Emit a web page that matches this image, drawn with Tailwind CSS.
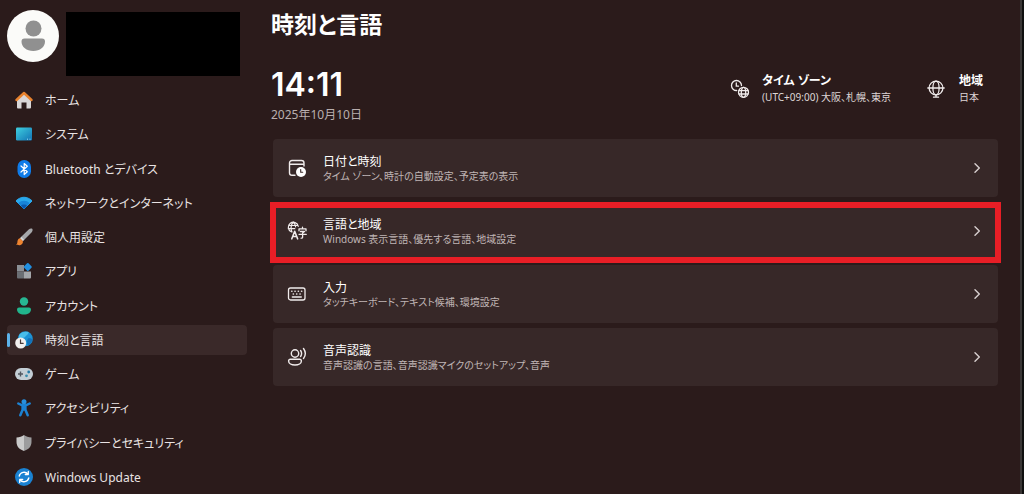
<!DOCTYPE html>
<html lang="ja">
<head>
  <meta charset="UTF-8" />
  <meta name="viewport" content="width=device-width, initial-scale=1" />
  <title>時刻と言語 - 設定</title>
  <script src="https://cdn.jsdelivr.net/npm/@tailwindcss/browser@4"></script>
</head>
<body class="flex min-h-screen border-r-2 border-[#10100f] bg-[#2b1b1b] font-['Noto_Sans','Noto_Sans_CJK_JP',sans-serif] text-[#e9e3e3] [font-feature-settings:'palt']">

  <!-- Sidebar -->
  <aside class="flex w-[248px] shrink-0 flex-col pl-[7px]">
    <div class="flex h-[83px] shrink-0 items-start gap-[7px] pt-[10px]">
      <svg class="h-[52px] w-[52px] shrink-0" viewBox="0 0 52 52" role="img" aria-label="ユーザー">
        <circle cx="26" cy="26" r="26" fill="#fbfbf9" />
        <circle cx="26.500" cy="18.500" r="8" fill="#909090" />
        <path d="M17.500 28.500h17.500a3 3 0 0 1 3 3c0 5.500-5 9.500-11.700 9.500s-11.800-4-11.800-9.500a3 3 0 0 1 3-3z" fill="#909090" />
      </svg>
      <div class="mt-[2px] h-[64px] w-[174px] bg-black"></div>
    </div>

    <nav class="flex flex-1 pr-[1px]" aria-label="設定">
      <ul class="flex flex-1 flex-col text-[12px] leading-4">
        <li class="flex flex-1 py-[2px]">
          <a href="#" class="flex flex-1 items-center gap-3 rounded px-2 hover:bg-white/5">
            <svg class="h-[18px] w-[18px]" viewBox="0 0 18 18">
              <path d="M2 8.500 9 2.500l7 6V16.500a1 1 0 0 1-1 1h-3.500v-6h-5v6H3a1 1 0 0 1-1-1z" fill="#d9d6d7" />
              <path d="M1.500 9 9 2l7.500 7" fill="none" stroke="#e8822e" stroke-width="2.400" stroke-linecap="round" stroke-linejoin="round" />
            </svg>
            <span class="pt-[2px]">ホーム</span>
          </a>
        </li>
        <li class="flex flex-1 py-[2px]">
          <a href="#" class="flex flex-1 items-center gap-3 rounded px-2 hover:bg-white/5">
            <svg class="h-[18px] w-[18px]" viewBox="0 0 18 18">
              <defs><linearGradient id="screen" x1="0" y1="0" x2="1" y2="1"><stop offset="0" stop-color="#3fd0e0" /><stop offset="1" stop-color="#1273b4" /></linearGradient></defs>
              <rect x="1" y="2.500" width="16" height="13" rx="1.200" fill="url(#screen)" />
              <path d="M12 14.200h1M14.500 14.200h1" stroke="#9fdcf5" stroke-width="1" />
            </svg>
            <span class="pt-[2px]">システム</span>
          </a>
        </li>
        <li class="flex flex-1 py-[2px]">
          <a href="#" class="flex flex-1 items-center gap-3 rounded px-2 hover:bg-white/5">
            <svg class="h-[18px] w-[18px]" viewBox="0 0 18 18">
              <rect x="2.500" y="0" width="13.500" height="18" rx="6.700" fill="#0f7be8" />
              <path d="M6 6l6.300 5.700L9.200 14.500V3.500l3.100 2.800L6 12" fill="none" stroke="#fff" stroke-width="1.200" stroke-linejoin="round" stroke-linecap="round" />
            </svg>
            <span class="pt-[2px]">Bluetooth とデバイス</span>
          </a>
        </li>
        <li class="flex flex-1 py-[2px]">
          <a href="#" class="flex flex-1 items-center gap-3 rounded px-2 hover:bg-white/5">
            <svg class="h-[18px] w-[18px]" viewBox="0 0 18 18">
              <path d="M1 7C5.500 2 12.500 2 17 7L9 15z" fill="#29a8ec" stroke="#29a8ec" stroke-linejoin="round" />
              <path d="M3.300 9.300C6.500 6 11.500 6 14.700 9.300L9 15z" fill="#1784d8" />
              <path d="M5.800 11.700C7.500 10 10.500 10 12.200 11.700L9 15z" fill="#0b58ad" />
            </svg>
            <span class="pt-[2px]">ネットワークとインターネット</span>
          </a>
        </li>
        <li class="flex flex-1 py-[2px]">
          <a href="#" class="flex flex-1 items-center gap-3 rounded px-2 hover:bg-white/5">
            <svg class="h-[18px] w-[18px]" viewBox="0 0 18 18">
              <path d="M17.200.8c-1-.8-2.400-.3-3.500.8L6 9l3 3 7.500-7.500c1.100-1.200 1.500-2.800.7-3.700z" fill="#a5a7aa" />
              <path d="M6.300 8.800 4.900 10.300l3 2.900 1.400-1.400z" fill="#d9dadb" />
              <path d="M4.900 10.300l3 2.900c.3 2.400-1.700 4-3.700 4-1.300 0-2.500-.3-3-.9 1.500-.4 1-1.800 1.300-3.200.4-1.700 1.300-2.600 2.400-2.800z" fill="#ee8430" />
            </svg>
            <span class="pt-[2px]">個人用設定</span>
          </a>
        </li>
        <li class="flex flex-1 py-[2px]">
          <a href="#" class="flex flex-1 items-center gap-3 rounded px-2 hover:bg-white/5">
            <svg class="h-[18px] w-[18px]" viewBox="0 0 18 18">
              <path d="M2 3h7v6.500H2z" fill="#8b9096" />
              <path d="M2 9.500h7v7H3a1 1 0 0 1-1-1z" fill="#6b6f74" />
              <path d="M9 9.500h7v6a1 1 0 0 1-1 1H9z" fill="#a3a6aa" />
              <rect x="9.700" y="1.900" width="6.200" height="6.200" rx="1" transform="rotate(45 12.800 5)" fill="#218fe0" />
            </svg>
            <span class="pt-[2px]">アプリ</span>
          </a>
        </li>
        <li class="flex flex-1 py-[2px]">
          <a href="#" class="flex flex-1 items-center gap-3 rounded px-2 hover:bg-white/5">
            <svg class="h-[18px] w-[18px]" viewBox="0 0 18 18">
              <circle cx="9" cy="4.500" r="4.200" fill="#27b793" />
              <path d="M4 10.500h10a2 2 0 0 1 2 2c0 3-3 5-7 5s-7-2-7-5a2 2 0 0 1 2-2z" fill="#21b58c" />
            </svg>
            <span class="pt-[2px]">アカウント</span>
          </a>
        </li>
        <li class="flex flex-1 py-[2px]">
          <a href="#" aria-current="page" class="relative flex flex-1 items-center gap-3 rounded bg-[#3a2929] px-2">
            <span class="absolute left-0 h-[14px] w-[3px] rounded-full bg-[#5cb2ea]"></span>
            <svg class="h-[18px] w-[18px]" viewBox="0 0 18 18">
              <circle cx="10.300" cy="7.800" r="7.500" fill="#1c93d6" />
              <path d="M4 4C6 1 10 0 13.500 1c.5 2-2 3-3 4.500S6 7 4 8z" fill="#48bdea" />
              <path d="M13 7.500c2-.5 3.500 0 4.500 1-.3 2.500-2 4.800-4.500 6-1.500-2-1.500-5 0-7z" fill="#1272ba" />
              <circle cx="5.700" cy="12" r="5.500" fill="#f1efee" />
              <path d="M5.500 8.800V12.300H8.200" fill="none" stroke="#47393a" stroke-width="1.200" stroke-linecap="round" />
            </svg>
            <span class="pt-[2px]">時刻と言語</span>
          </a>
        </li>
        <li class="flex flex-1 py-[2px]">
          <a href="#" class="flex flex-1 items-center gap-3 rounded px-2 hover:bg-white/5">
            <svg class="h-[18px] w-[18px]" viewBox="0 0 18 18">
              <rect x="0" y="3" width="18" height="12" rx="6" fill="#c3ced5" />
              <path d="M5.500 6.500v5M3 9h5" stroke="#50565e" stroke-width="1.400" />
              <circle cx="13.700" cy="7" r="1.400" fill="#2479a6" />
              <circle cx="11.500" cy="10.800" r="1.400" fill="#3a8cac" />
            </svg>
            <span class="pt-[2px]">ゲーム</span>
          </a>
        </li>
        <li class="flex flex-1 py-[2px]">
          <a href="#" class="flex flex-1 items-center gap-3 rounded px-2 hover:bg-white/5">
            <svg class="h-[18px] w-[18px]" viewBox="0 0 18 18">
              <circle cx="9" cy="2.800" r="2.500" fill="#2791e0" />
              <path d="M3.300 4.500 6.800 6.200h4.400l3.500-1.700M9 6.500v4M7.600 6.500v4.300L5.300 16.300M10.400 6.500v4.300l2.300 5.500" fill="none" stroke="#1c82d3" stroke-width="2.500" stroke-linecap="round" stroke-linejoin="round" />
            </svg>
            <span class="pt-[2px]">アクセシビリティ</span>
          </a>
        </li>
        <li class="flex flex-1 py-[2px]">
          <a href="#" class="flex flex-1 items-center gap-3 rounded px-2 hover:bg-white/5">
            <svg class="h-[18px] w-[18px]" viewBox="0 0 18 18">
              <path d="M9 1C7 2.600 4.500 3.300 1.500 3.500V8c0 4.500 3 7.500 7.500 9z" fill="#cacaca" />
              <path d="M9 1c2 1.600 4.500 2.300 7.500 2.500V8c0 4.500-3 7.500-7.500 9z" fill="#9c9c9d" />
            </svg>
            <span class="pt-[2px]">プライバシーとセキュリティ</span>
          </a>
        </li>
        <li class="flex flex-1 py-[2px]">
          <a href="#" class="flex flex-1 items-center gap-3 rounded px-2 hover:bg-white/5">
            <svg class="h-[18px] w-[18px]" viewBox="0 0 18 18">
              <circle cx="9" cy="9" r="9" fill="#1a82d2" />
              <path d="M4.200 8A5 5 0 0 1 13 6.200M13.800 10A5 5 0 0 1 5 11.800M13.300 3.500v3h-3M4.700 14.500v-3h3" fill="none" stroke="#fff" stroke-width="1.300" stroke-linecap="round" stroke-linejoin="round" />
            </svg>
            <span class="pt-[2px]">Windows Update</span>
          </a>
        </li>
      </ul>
    </nav>
  </aside>

  <!-- Main content -->
  <main class="min-w-0 flex-1 border-r-2 border-[#3a3635] pr-[22px] pl-[23px]">
    <h1 class="pt-1 text-[23px] leading-10 font-semibold text-white">時刻と言語</h1>

    <div class="flex items-start pt-[22px]">
      <div class="flex-1">
        <p class="font-['Inter',sans-serif] text-[32px] leading-[38px] font-semibold text-white">14:11</p>
        <p class="pt-[3px] text-[12px] leading-4 text-[#b9afaf]">2025年10月10日</p>
      </div>
      <div class="flex gap-9 pt-[7px] pr-[15px]">
        <div class="flex items-center gap-3">
          <svg class="h-5 w-5" viewBox="0 0 20 20" fill="none" stroke="#f0ebeb" stroke-width="1.300" stroke-linecap="round">
            <path d="M6.700 11.500A5 5 0 1 1 11.500 6.500" />
            <path d="M6.300 4v3.200h2.200" />
            <circle cx="13.500" cy="13.300" r="5" />
            <ellipse cx="13.500" cy="13.300" rx="2.200" ry="5" />
            <path d="M9 11.700h9M9 15h9" />
          </svg>
          <div>
            <p class="text-[12px] leading-4 font-bold text-white">タイム ゾーン</p>
            <p class="text-[10px] leading-4 text-[#ded6d6]">(UTC+09:00) 大阪、札幌、東京</p>
          </div>
        </div>
        <div class="flex items-center gap-[14px]">
          <svg class="h-[18px] w-[18px]" viewBox="0 0 18 18" fill="none" stroke="#f0ebeb" stroke-width="1.300" stroke-linecap="round">
            <circle cx="9" cy="8" r="6.900" />
            <ellipse cx="9" cy="8" rx="3.100" ry="6.900" />
            <path d="M.8 8h16.400M9 15v2M6.500 17.200h5" />
          </svg>
          <div>
            <p class="text-[12px] leading-4 font-bold text-white">地域</p>
            <p class="text-[10px] leading-4 text-[#ded6d6]">日本</p>
          </div>
        </div>
      </div>
    </div>

    <div class="flex flex-col gap-[5px] pt-4 pl-[2px]">
      <a href="#" class="flex h-[58px] items-center rounded bg-[#372828] pr-4 pl-[14px] hover:bg-[#402f2f]">
        <svg class="mr-4 h-5 w-5" viewBox="0 0 20 20" fill="none" stroke="#f0ebeb" stroke-width="1.400" stroke-linecap="round">
          <path d="M8 17.300H5A2.500 2.500 0 0 1 2.500 14.800V5A2.500 2.500 0 0 1 5 2.500h9.500A2.500 2.500 0 0 1 17 5v3M2.500 6.300H17" />
          <circle cx="14" cy="14" r="5" fill="#fff" stroke="none" />
          <path d="M13.700 11.500v2.700h2" stroke="#372828" stroke-width="1.100" />
        </svg>
        <div class="flex-1 pt-[2px]">
          <p class="text-[12px] leading-[15px] text-white">日付と時刻</p>
          <p class="text-[10px] leading-[15px] text-[#c0b6b6]">タイム ゾーン、時計の自動設定、予定表の表示</p>
        </div>
        <svg class="h-[10px] w-[10px]" viewBox="0 0 10 10" fill="none" stroke="#d8d0d0" stroke-width="1.400" stroke-linecap="round" stroke-linejoin="round"><path d="M3 .8 7.300 5 3 9.200" /></svg>
      </a>

      <a href="#" class="relative flex h-[58px] items-center rounded bg-[#372828] pr-4 pl-[14px] hover:bg-[#402f2f]">
        <span class="absolute -inset-x-[3px] top-0 -bottom-[3px] border-[6px] border-[#e81e26]"></span>
        <svg class="mr-4 h-5 w-5" viewBox="0 0 20 20" fill="none" stroke="#f0ebeb" stroke-width="1.200" stroke-linecap="round" stroke-linejoin="round">
          <path d="M4.300 10.800A5 5 0 1 1 11.300 5.300M1.700 4.500h9M1.300 7.700h6.500M6.200 1.200C3.700 3.500 3.600 8 5 11M6.200 1.200c1.600 1.300 2.200 2.600 2.400 4.600" />
          <path d="M4.800 17.800 7.700 10.300l2.900 7.500M5.900 15.500h3.600" stroke-width="1.600" />
          <path d="M15.500 6.200v1.300M12 9.800V7.800h7v2M13.500 10.500h4L15.600 12v4.200c0 .8-.5 1.100-1.500 1M12 13.300h7.300" stroke-width="1.300" />
        </svg>
        <div class="flex-1 pt-[2px]">
          <p class="text-[12px] leading-[15px] text-white">言語と地域</p>
          <p class="text-[10px] leading-[15px] text-[#c0b6b6]">Windows 表示言語、優先する言語、地域設定</p>
        </div>
        <svg class="h-[10px] w-[10px]" viewBox="0 0 10 10" fill="none" stroke="#d8d0d0" stroke-width="1.400" stroke-linecap="round" stroke-linejoin="round"><path d="M3 .8 7.300 5 3 9.200" /></svg>
      </a>

      <a href="#" class="flex h-[58px] items-center rounded bg-[#372828] pr-4 pl-[14px] hover:bg-[#402f2f]">
        <svg class="mr-4 h-5 w-5" viewBox="0 0 20 20" fill="none" stroke="#f0ebeb" stroke-width="1.300" stroke-linecap="round">
          <rect x="1.500" y="4" width="16.500" height="12" rx="2" />
          <path d="M4.800 7.300h.1M8 7.300h.1M11.300 7.300h.1M14.600 7.300h.1M6.300 10h.1M9.700 10h.1M13 10h.1" stroke-width="1.600" />
          <path d="M5.300 13h9" />
        </svg>
        <div class="flex-1 pt-[2px]">
          <p class="text-[12px] leading-[15px] text-white">入力</p>
          <p class="text-[10px] leading-[15px] text-[#c0b6b6]">タッチキーボード、テキスト候補、環境設定</p>
        </div>
        <svg class="h-[10px] w-[10px]" viewBox="0 0 10 10" fill="none" stroke="#d8d0d0" stroke-width="1.400" stroke-linecap="round" stroke-linejoin="round"><path d="M3 .8 7.300 5 3 9.200" /></svg>
      </a>

      <a href="#" class="flex h-[58px] items-center rounded bg-[#372828] pr-4 pl-[14px] hover:bg-[#402f2f]">
        <svg class="mr-4 h-5 w-5" viewBox="0 0 20 20" fill="none" stroke="#f0ebeb" stroke-width="1.400" stroke-linecap="round">
          <circle cx="8" cy="6.500" r="3.700" />
          <path d="M3.300 12.300h9.400a1.700 1.700 0 0 1 1.700 1.700c0 2.300-2.800 4-6.400 4s-6.400-1.700-6.400-4a1.700 1.700 0 0 1 1.700-1.700z" />
          <path d="M13.600 3.500c1.200 1.800 1.200 4.200 0 6M16.500 1.500c2.200 3 2.200 7 0 10" />
        </svg>
        <div class="flex-1 pt-[2px]">
          <p class="text-[12px] leading-[15px] text-white">音声認識</p>
          <p class="text-[10px] leading-[15px] text-[#c0b6b6]">音声認識の言語、音声認識マイクのセットアップ、音声</p>
        </div>
        <svg class="h-[10px] w-[10px]" viewBox="0 0 10 10" fill="none" stroke="#d8d0d0" stroke-width="1.400" stroke-linecap="round" stroke-linejoin="round"><path d="M3 .8 7.300 5 3 9.200" /></svg>
      </a>
    </div>
  </main>

</body>
</html>
